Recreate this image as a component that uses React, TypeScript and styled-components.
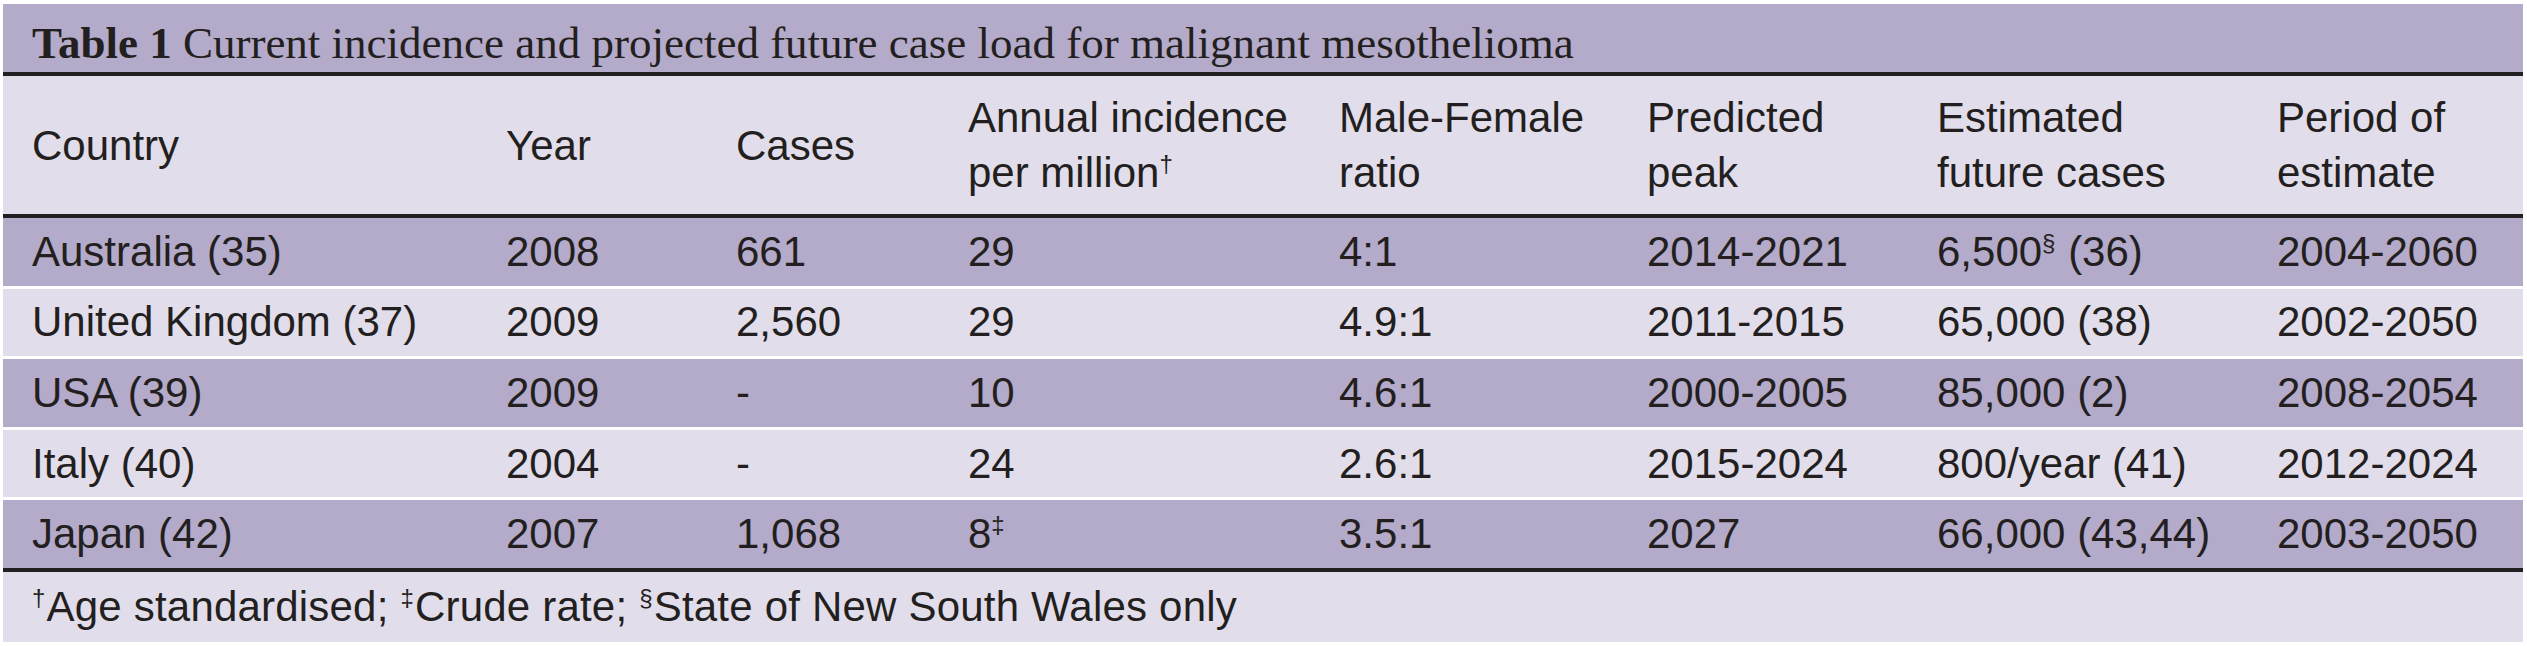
import React from 'react'
import styled, { createGlobalStyle } from 'styled-components'

const INK = '#231f20'
const DARK = '#b4aac9'
const LIGHT = '#e1ddea'
const COLS = '474px 230px 232px 371px 308px 290px 340px 275px'

const GlobalStyle = createGlobalStyle`
  html, body {
    margin: 0;
    background: #ffffff;
  }
`

const Page = styled.div`
  padding: 4px 4px 4px 3px;
  background: #ffffff;
`

const Figure = styled.div`
  width: 2520px;
  display: flex;
  flex-direction: column;
  color: ${INK};
  font-family: 'Liberation Sans', Arial, sans-serif;
  font-size: 42px;
`

const Caption = styled.div`
  box-sizing: border-box;
  height: 72px;
  display: flex;
  align-items: center;
  white-space: pre;
  padding: 9px 0 0 29px;
  background: ${DARK};
  border-bottom: 4px solid ${INK};
  font-family: 'Liberation Serif', 'Times New Roman', serif;
  font-size: 45px;
`

const CaptionLabel = styled.b`
  font-weight: 700;
`

const HeaderRow = styled.div`
  height: 138px;
  display: grid;
  grid-template-columns: ${COLS};
  align-items: center;
  background: ${LIGHT};
  border-bottom: 4px solid ${INK};
`

const HeadCell = styled.div`
  padding-left: 29px;
  line-height: 55px;
  white-space: nowrap;
`

const Body = styled.div`
  display: flex;
  flex-direction: column;
  gap: 3px;
  background: #ffffff;
`

const DataRow = styled.div<{ $shaded: boolean }>`
  height: 67.6px;
  display: grid;
  grid-template-columns: ${COLS};
  align-items: center;
  background: ${p => (p.$shaded ? DARK : LIGHT)};
`

const Cell = styled.div`
  padding-left: 29px;
  line-height: 48px;
  white-space: nowrap;
`

const Footnote = styled.div`
  height: 70px;
  display: flex;
  align-items: center;
  padding-left: 29px;
  background: ${LIGHT};
  border-top: 4px solid ${INK};
`

const FootnoteText = styled.p`
  margin: 0;
  line-height: 48px;
  white-space: nowrap;
  letter-spacing: 0.2px;
`

const Sup = styled.span`
  font-size: 24px;
  line-height: 0;
  vertical-align: 15px;
  padding-right: 1px;
`

type Row = {
  country: string
  year: string
  cases: string
  incidence: React.ReactNode
  ratio: string
  peak: string
  future: React.ReactNode
  period: string
}

const rows: Row[] = [
  {
    country: 'Australia (35)',
    year: '2008',
    cases: '661',
    incidence: '29',
    ratio: '4:1',
    peak: '2014-2021',
    future: (
      <>
        6,500<Sup>§</Sup> (36)
      </>
    ),
    period: '2004-2060',
  },
  {
    country: 'United Kingdom (37)',
    year: '2009',
    cases: '2,560',
    incidence: '29',
    ratio: '4.9:1',
    peak: '2011-2015',
    future: '65,000 (38)',
    period: '2002-2050',
  },
  {
    country: 'USA (39)',
    year: '2009',
    cases: '-',
    incidence: '10',
    ratio: '4.6:1',
    peak: '2000-2005',
    future: '85,000 (2)',
    period: '2008-2054',
  },
  {
    country: 'Italy (40)',
    year: '2004',
    cases: '-',
    incidence: '24',
    ratio: '2.6:1',
    peak: '2015-2024',
    future: '800/year (41)',
    period: '2012-2024',
  },
  {
    country: 'Japan (42)',
    year: '2007',
    cases: '1,068',
    incidence: (
      <>
        8<Sup>‡</Sup>
      </>
    ),
    ratio: '3.5:1',
    peak: '2027',
    future: '66,000 (43,44)',
    period: '2003-2050',
  },
]

function App() {
  return (
    <Page>
      <GlobalStyle />
      <Figure>
        <Caption>
          <CaptionLabel>Table 1</CaptionLabel> Current incidence and projected
          future case load for malignant mesothelioma
        </Caption>
        <HeaderRow>
          <HeadCell>Country</HeadCell>
          <HeadCell>Year</HeadCell>
          <HeadCell>Cases</HeadCell>
          <HeadCell>
            Annual incidence
            <br />
            per million<Sup>†</Sup>
          </HeadCell>
          <HeadCell>
            Male-Female
            <br />
            ratio
          </HeadCell>
          <HeadCell>
            Predicted
            <br />
            peak
          </HeadCell>
          <HeadCell>
            Estimated
            <br />
            future cases
          </HeadCell>
          <HeadCell>
            Period of
            <br />
            estimate
          </HeadCell>
        </HeaderRow>
        <Body>
          {rows.map((r, i) => (
            <DataRow key={r.country} $shaded={i % 2 === 0}>
              <Cell>{r.country}</Cell>
              <Cell>{r.year}</Cell>
              <Cell>{r.cases}</Cell>
              <Cell>{r.incidence}</Cell>
              <Cell>{r.ratio}</Cell>
              <Cell>{r.peak}</Cell>
              <Cell>{r.future}</Cell>
              <Cell>{r.period}</Cell>
            </DataRow>
          ))}
        </Body>
        <Footnote>
          <FootnoteText>
            <Sup>†</Sup>Age standardised; <Sup>‡</Sup>Crude rate;{' '}
            <Sup>§</Sup>State of New South Wales only
          </FootnoteText>
        </Footnote>
      </Figure>
    </Page>
  )
}

export default App
